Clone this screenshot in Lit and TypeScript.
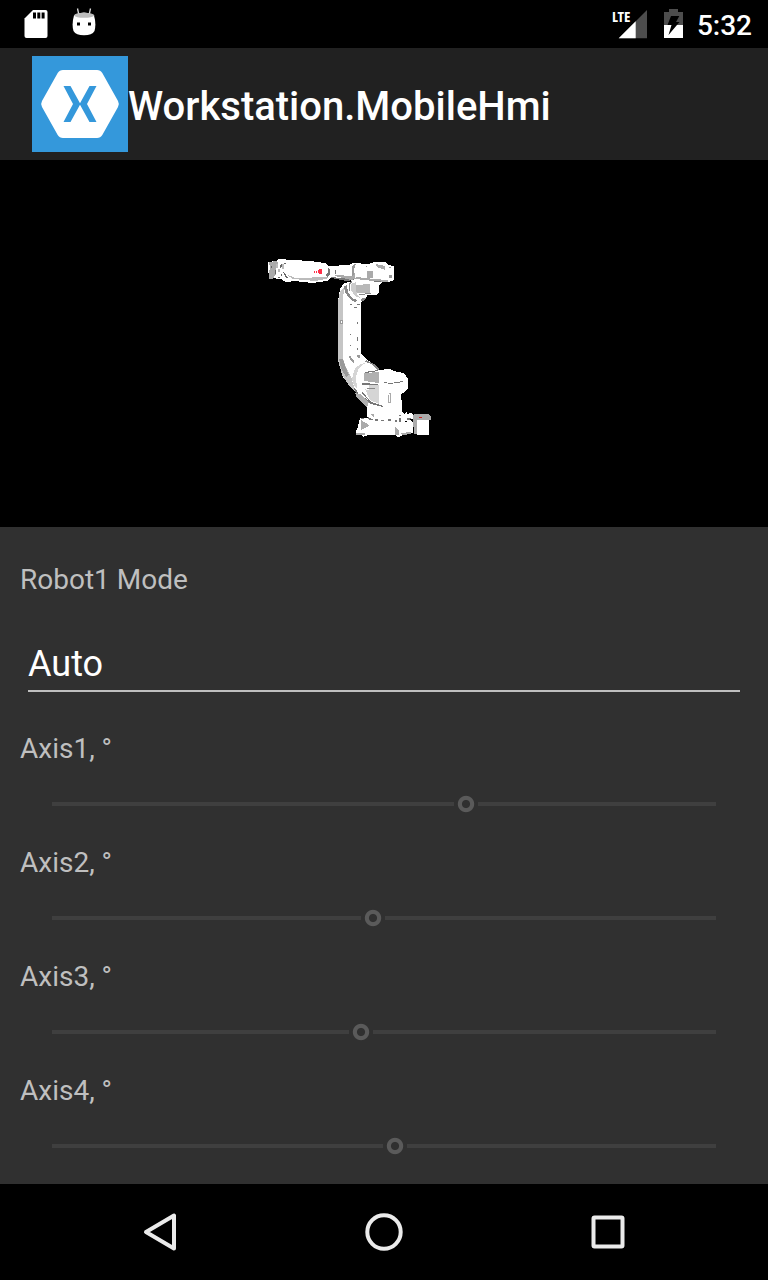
import { LitElement, html, css, svg } from "lit";
import { customElement, property } from "lit/decorators.js";

@customElement("status-bar")
class StatusBar extends LitElement {
  static styles = css`
    :host {
      display: flex;
      align-items: center;
      justify-content: space-between;
      height: 48px;
      padding: 0 16px 0 24px;
      background: #000;
      color: #fff;
      font: 500 28px/34px Roboto, sans-serif;
    }
    .group {
      display: flex;
      align-items: center;
      gap: 24px;
    }
    .system {
      gap: 14px;
    }
    .time {
      padding-top: 4px;
    }
    svg {
      display: block;
    }
    .lte {
      font: bold 15px "Liberation Sans Narrow", "Open Sans Condensed", sans-serif;
    }
  `;

  render() {
    return html`
      <div class="group">
        <svg width="24" height="48" viewBox="24 0 24 48" aria-label="SD card">
          <path fill="#fff" d="M33 10h12.500a2 2 0 0 1 2 2v24a2 2 0 0 1-2 2h-19a2 2 0 0 1-2-2V18.500z" />
          <path d="M33 12.500h3v6h-3zM37.300 12.500h3v6h-3zM41.600 12.500h3v6h-3z" />
        </svg>
        <svg width="24" height="48" viewBox="72 0 24 48" aria-label="Android">
          <path d="M77.500 8.500l1.300 6M90.500 8.500l-1.300 6" stroke="#ddd" stroke-width="1.300" />
          <path fill="#fff" d="M74 15.500Q84 9.500 94 15.500Q96.500 24 94.500 31Q92 35.300 84 35.300T73.500 31Q71.500 24 74 15.500z" />
          <path fill="#bdbdbd" d="M74 15.500Q75 12.800 84 12.800T94.500 15.500Q92 17.800 84 17.800T74 15.500z" />
          <path d="M77 22.500h3v3h-3zM88 22.500h3v3h-3z" />
        </svg>
      </div>
      <div class="group system">
        <svg width="38" height="48" viewBox="612 0 38 48" aria-label="LTE signal">
          <path fill="#4d4d4d" d="M647 10v28.300h-28.300z" />
          <path fill="#fff" d="M635.700 21.300v17h-17z" />
          <text class="lte" x="612" y="22" fill="#fff">LTE</text>
        </svg>
        <svg width="19" height="48" viewBox="664 0 19 48" aria-label="Battery charging">
          <path fill="#4d4d4d" d="M669 9h9v3h5v13h-19V12h5z" />
          <path fill="#fff" d="M664 25h19v13h-19z" />
          <path d="M671 16h8.300l-3.300 6h3.500l-11 13 3-10h-4z" />
        </svg>
        <span class="time">5:32</span>
      </div>
    `;
  }
}

@customElement("robot-view")
class RobotView extends LitElement {
  static styles = css`
    :host {
      display: block;
      background: #000;
    }
    svg {
      display: block;
      width: 100%;
      height: auto;
    }
  `;

  render() {
    return html`
      <svg viewBox="0 160 768 367" role="img" aria-label="Robot arm" shape-rendering="crispEdges">
        ${svg`
        <!-- pedestal and connector box -->
        <path fill="#fff" d="M368 400h34v12l2 2 3-2v2l3-1 3 1v4l-2 2 2 3v10h-9l-2 3-4 1-3-2h-27l-5 2-1-2h-6v-5h1l3-12h7z" />
        <path fill="#aaa" d="M414 414h15l2 3v3h-18v-3z" />
        <path fill="#fff" d="M417 420h12v15h-12z" />
        <path fill="#aaa" d="M413 420h4v14h-3z" />
        <path fill="#c22" d="M419 417h3v1h-3z" />
        <path fill="#aaa" d="M361 420l5 3 3 3-8 4v-6zM356 433h9v2h-9zM369 408h5v9l-2-1-3-5zM395 427l4 4v4h-4zM401 433l10-1v2l-9 1z" />
        <path fill="#777" d="M361 418h3v1h-3zM368 417l6 3h-5zM375 419h3v2h-3zM381 420h3v1h-3zM388 419h3v2h-3zM395 420h2v2h-2zM399 418h2v4h-2zM407 418h4v2h-4zM399 415h2v1h-2z" />
        <path d="M365 417h3v1h-3zM405 421h2v1h-2zM410 419h3v1h-3z" />

        <!-- lower arm -->
        <path fill="#fff" d="M340 289l4-6 6-1 8 9 3 8v55l5 5 6 5v28l-10 3-11-7-8-11-5-18V301z" />
        <path fill="#c5c5c5" d="M340 292l4-5 1 1-2 8v62l3 9 5 10 5 6v10l-6-6-8-12-4-15v-59z" />
        <path fill="#999" d="M340 320h3v4h-3zM339 359h4l3 9 3 7-3 2-5-9zM349 356l1 4 4 4v-4l-2-1-1-3zM357 355h3v3h-2z" />
        <path fill="#fff" d="M341 321h1v2h-1z" />
        <path fill="#777" d="M357 304h3v1h-3zM350 304h2v1h-2zM350 334h1v1h-1zM350 345h1v1h-1zM357 322h1v2h-1zM357 337h1v4h-1zM357 348h1v2h-1zM354 307h3v1h-3z" />

        <!-- turning joint -->
        <path fill="#fff" d="M352 374l3-9 8-5 7 1 8 9 12-1 7 3 7 1 4 6v9l-3 4-4 2v20h-31l-4-8-9-11-5-14z" />
        <path fill="#b0b0b0" d="M355 393l6 1 8 8-2 6-10-10zM364 373l15-1v11l-15-2z" />
        <path fill="#777" d="M364 372l14-2v1l-12 2zM362 391l9 11 12 4v1l-12-3-10-9zM354 387l3 4 2 5-4-4zM362 383l16 1v1h-16zM382 382l9 1 12-2v1l-13 2z" />
        <path fill="#d5d5d5" d="M369 385h10v9h-10zM365 389l14 5v10l-9-4zM352 379l3-11 6-4 4-1-6 6-3 8 1 12-3-3z" />
        <path fill="#888" d="M366 360l8 4 6 5-2 1-7-6-6-2zM367 388h8v1h-8z" />
        <path fill="#fff" d="M364 364l4 1 4 4-8 3-3 8 1 13 6 7-7-5-4-8-1-11 3-8z" />
        <path fill="none" stroke="#aaa" d="M388.500 394.500v8h2v-9h-2" />

        <!-- upper arm -->
        <path fill="#fff" d="M268 262l8-1 2-2 32 2 15 2 4 3 20-1 4-2 16 1 5-2h11l3 3 6 1v14l-5 2h-6l-4 3-23-4-11-1-15-2-3 3-15 2-17-2-9 1-5-3-10-1-3-6z" />
        <path fill="#aaa" d="M269 262l7-1 2 2-2 4v7l-3 5h-4v-6l1-6z" />
        <path fill="#666" d="M271 266h1v2h-1zM275 270h1v4h-1zM279 275l3-1v2zM280 265l2-1v2l-2 2zM283 272h1l4 6h-2zM284 263h2v1h-2zM278 277h2v1h-2z" />
        <path fill="#bbb" d="M276 264h2v4h-2zM278 269h2v3h-2zM282 264h2v5h-2zM286 274l9 4 33-1-2 2-11 2-22-2z" />
        <path fill="#777" d="M328 267l2 3v5l-3 2-1-2 2-3zM335 270h1v4h-1zM331 277l20 2 4-4-1 5-8 1-15-3zM374 279l14 1v1l-14 1z" />
        <path fill="#aaa" d="M335 275l17 1 3-4v7l-4 1-16-4zM367 271h6v7h-6zM376 264l9 2v4l-8-3zM356 277l18 2 14 1v2l-15-1-18-2z" />
        <path fill="#999" d="M352 266l3-2h1l-2 5v5l-2 2zM366 266h1v1h-1zM389 267h2v1h-2zM389 275h3v3h-3z" />
        <path fill="#ff3048" d="M314 271h1v2h-1zM316 271h1v2h-1zM318 270h1v-1h3v5h-3v-1h-1z" />

        <!-- wrist motor -->
        <path fill="#fff" d="M349 282l7-2 23 3v10l-3 2h-9l-1 4-5 3-6-3-6-9z" />
        <path fill="#b8b8b8" d="M356 285l14-1v9h-14z" />
        <path fill="#888" d="M344 286l3-1 1 7 4 6 5 2-2 2-5-3-5-7zM349 283l2-2 1 1-2 2v6l-1 2zM358 294l13-1v1l-12 1zM362 298h4l-2 3h-3z" />
        <path fill="#ccc" d="M351 284l5-2v9l2 5 3 2-5-1-5-7z" />
        `}
      </svg>
    `;
  }
}

@customElement("axis-slider")
class AxisSlider extends LitElement {
  @property() label = "";
  @property({ type: Number }) value = 0;

  static styles = css`
    :host {
      display: flex;
      flex-direction: column;
      gap: 26px;
    }
    label {
      color: #bfbfbf;
    }
    input {
      appearance: none;
      box-sizing: border-box;
      height: 24px;
      margin: 0 20px;
      padding: 0;
      background: transparent;
    }
    input::-webkit-slider-runnable-track {
      height: 24px;
      background: linear-gradient(#3f3f3f, #3f3f3f) center / calc(100% - 24px) 4px no-repeat;
    }
    input::-webkit-slider-thumb {
      appearance: none;
      width: 24px;
      height: 24px;
      background: radial-gradient(circle, #303030 0 30%, #5a5a5a 38% 45%, #5a5a5a 45%, #303030 50%);
      background: radial-gradient(circle closest-side, #303030 0 30%, #5a5a5a 38% 64%, #303030 72%);
    }
  `;

  render() {
    return html`
      <label for="axis">${this.label}</label>
      <input id="axis" type="range" min="-180" max="180" step="0.5" .value=${String(this.value)} disabled />
    `;
  }
}

@customElement("nav-bar")
class NavBar extends LitElement {
  static styles = css`
    :host {
      display: flex;
      height: 96px;
      padding: 0 48px;
      background: #000;
    }
    button {
      flex: 1;
      display: grid;
      place-items: center;
      padding: 0;
      border: 0;
      background: none;
    }
    svg {
      fill: none;
      stroke: #ebebeb;
      stroke-width: 4;
      stroke-linejoin: round;
    }
  `;

  render() {
    return html`
      <button aria-label="Back">
        <svg width="48" height="48" viewBox="0 0 48 48"><path d="M38 7.500v33L10 24z" /></svg>
      </button>
      <button aria-label="Home">
        <svg width="48" height="48" viewBox="0 0 48 48"><circle cx="24" cy="24" r="16.700" /></svg>
      </button>
      <button aria-label="Recent apps">
        <svg width="48" height="48" viewBox="0 0 48 48"><rect x="9.500" y="9.500" width="29" height="29" rx="1" /></svg>
      </button>
    `;
  }
}

@customElement("app-root")
class AppRoot extends LitElement {
  static styles = css`
    :host {
      display: flex;
      flex-direction: column;
      min-height: 100vh;
      background: #303030;
      font: 28px/34px Roboto, sans-serif;
    }
    header {
      display: flex;
      align-items: center;
      height: 112px;
      padding: 0 32px;
      background: #212121;
      color: #fff;
    }
    h1 {
      margin: 0;
      font-size: 40px;
      font-weight: 500;
      line-height: 48px;
      padding-top: 6px;
    }
    main {
      flex: 1;
      display: flex;
      flex-direction: column;
      gap: 30px;
      padding: 36px 20px 26px;
    }
    .mode {
      display: flex;
      flex-direction: column;
      gap: 39px;
      padding-bottom: 10px;
    }
    .mode label {
      color: #bfbfbf;
    }
    .mode input {
      box-sizing: border-box;
      height: 56px;
      margin: 0 8px;
      padding: 2px 0 0;
      border: 0;
      border-bottom: 2px solid #bfbfbf;
      border-radius: 0;
      outline: 0;
      background: none;
      color: #fff;
      font: 36px/52px Roboto, sans-serif;
    }
  `;

  private axes = [44.5, -6, -12.5, 6];

  render() {
    return html`
      <status-bar></status-bar>
      <header>
        <svg width="96" height="96" viewBox="0 0 96 96" aria-hidden="true">
          <path fill="#3498db" d="M0 0h96v96H0z" />
          <path fill="#fff" d="M31 14h34q3.500 0 5.300 3l15.700 28q1.700 3 0 6L70.300 79q-1.800 3-5.300 3H31q-3.500 0-5.300-3L10 51q-1.700-3 0-6l15.700-28q1.800-3 5.300-3z" />
          <path fill="#3498db" d="M31.500 30h7L48 47.200 57.500 30h7L55 48l9.500 18h-7L48 48.800 38.500 66h-7L41 48z" />
        </svg>
        <h1>Workstation.MobileHmi</h1>
      </header>
      <robot-view></robot-view>
      <main>
        <div class="mode">
          <label for="mode">Robot1 Mode</label>
          <input id="mode" type="text" value="Auto" readonly />
        </div>
        ${this.axes.map((v, i) => html`<axis-slider label="Axis${i + 1}, °" .value=${v}></axis-slider>`)}
      </main>
      <nav-bar></nav-bar>
    `;
  }
}
